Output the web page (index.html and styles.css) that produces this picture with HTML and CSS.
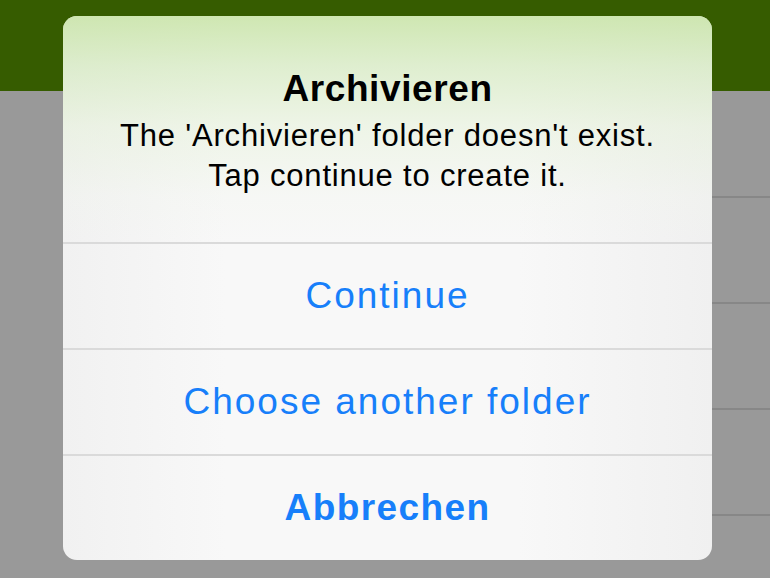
FILE: index.html
```html
<!DOCTYPE html>
<html lang="en">
<head>
  <meta charset="UTF-8">
  <meta name="viewport" content="width=device-width, initial-scale=1.0">
  <title>Archivieren</title>
  <link rel="stylesheet" href="styles.css">
</head>
<body>
  <div class="screen">
    <div class="navbar"></div>
    <ul class="list">
      <li></li>
      <li></li>
      <li></li>
      <li></li>
    </ul>

    <!-- alert over the list -->
    <div class="alert">
      <div class="alert-header">
        <h1>Archivieren</h1>
        <p>The 'Archivieren' folder doesn't exist.<br>Tap continue to create it.</p>
      </div>
      <button class="alert-btn">Continue</button>
      <button class="alert-btn">Choose another folder</button>
      <button class="alert-btn cancel">Abbrechen</button>
    </div>
  </div>
</body>
</html>
```

FILE: styles.css
```css
:root {
  --nav-green: #365c00;
  --backdrop: #999999;
  --row-line: #878787;
  --alert-line: #dadada;
  --ios-blue: #177ffa;
  --radius: 14px;
}

body {
  margin: 0;
  background-color: var(--backdrop);
  font-family: "Liberation Sans", Arial, sans-serif;
}

.screen {
  position: relative;
  width: 770px;
  height: 578px;
  overflow: hidden;
}

.navbar {
  height: 91px;
  background-color: var(--nav-green);
}

.list {
  list-style: none;
  margin: 0;
  padding: 1px 0 0 100px;
}

.list li {
  height: 106px;
  box-sizing: border-box;
  border-bottom: 2px solid var(--row-line);
}

.alert {
  position: absolute;
  left: 63px;
  top: 16px;
  width: 649px;
  height: 544px;
  border-radius: var(--radius);
  overflow: hidden;
  display: flex;
  flex-direction: column;
  background: linear-gradient(to right, #f1f1f1 0, #f8f8f8 25%, #f8f8f8 70%, #f0f0f0 100%);
}

.alert-header {
  height: 226px;
  box-sizing: border-box;
  padding-top: 52px;
  text-align: center;
  color: #000;
  background: linear-gradient(to bottom,
    rgba(200, 228, 166, 0.85) 0,
    rgba(212, 234, 190, 0.7) 50px,
    rgba(228, 241, 214, 0.5) 110px,
    rgba(240, 245, 235, 0.25) 180px,
    rgba(247, 247, 247, 0) 226px);
}

.alert-header h1 {
  margin: 0;
  font-size: 37px;
  line-height: 42px;
  font-weight: bold;
  letter-spacing: 0.6px;
}

.alert-header p {
  margin: 6px 0 0;
  font-size: 31px;
  line-height: 40px;
  letter-spacing: 0.8px;
}

.alert-btn {
  height: 106px;
  border: 0;
  border-top: 2px solid var(--alert-line);
  background: transparent;
  padding: 0;
  font-family: inherit;
  font-size: 37px;
  letter-spacing: 2px;
  color: var(--ios-blue);
}

.alert-btn.cancel {
  font-weight: bold;
  letter-spacing: 1.4px;
}
```
